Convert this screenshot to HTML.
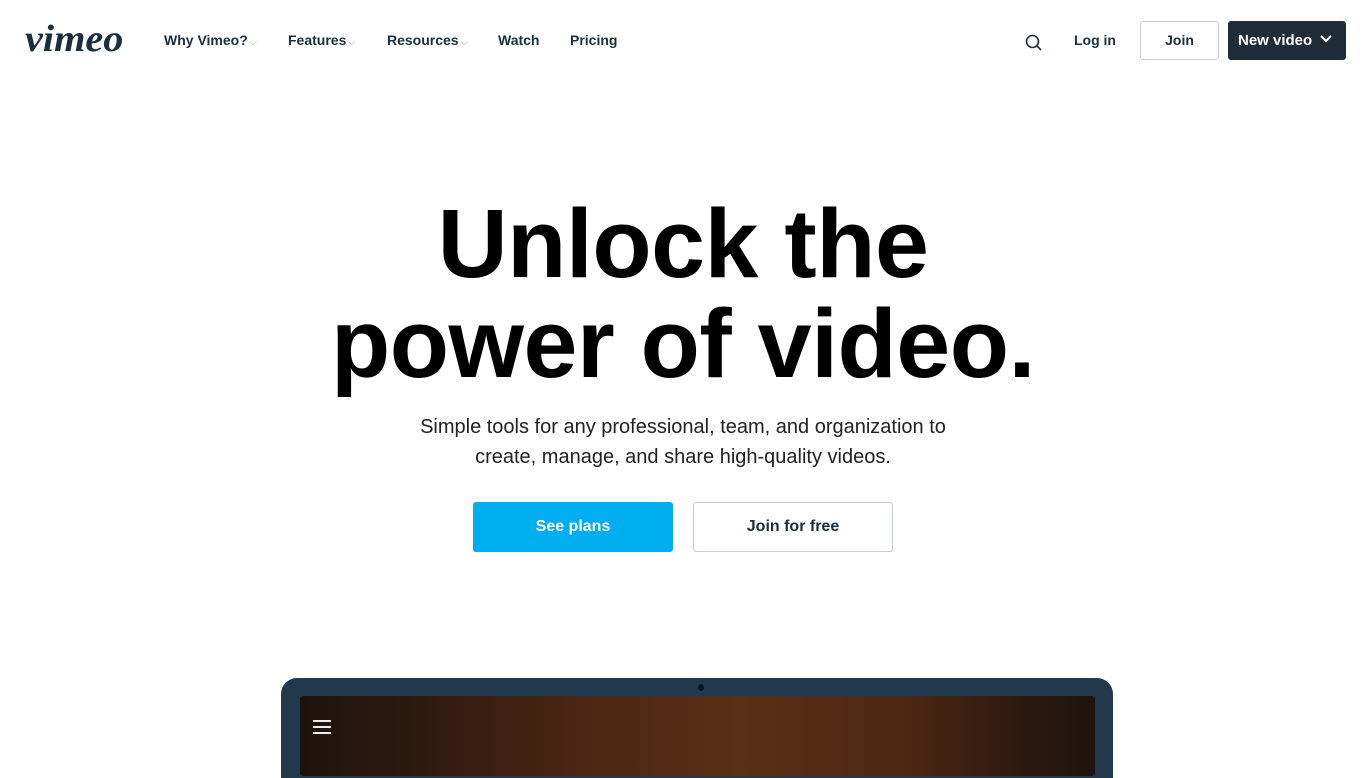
<!DOCTYPE html>
<html><head><meta charset="utf-8"><style>
*{margin:0;padding:0;box-sizing:border-box}
body{width:1366px;height:768px;overflow:hidden;background:#fff;font-family:"Liberation Sans",Arial,sans-serif;color:#1a2e3b;position:relative}
.a{position:absolute}
.nav{font-size:14px;font-weight:bold;top:32px;color:#1a2e3b}
.car{font-size:9px;color:#999;font-weight:normal;margin-left:2px}
h1{position:absolute;left:0;width:1366px;text-align:center;font-size:97px;line-height:100px;font-weight:bold;color:#000;top:194px;letter-spacing:-0.5px}
.sub{left:0;width:1366px;text-align:center;font-size:20px;line-height:30px;color:#222;top:412px}
.btn{top:502px;height:50px;width:200px;border-radius:3px;font-size:16px;font-weight:bold;text-align:center;line-height:48px}
</style></head><body>
<div class="a" style="left:25px;top:19px;font-family:'Liberation Serif',serif;font-style:italic;font-weight:bold;font-size:38px;color:#1a2e3b;letter-spacing:0px;line-height:40px;transform:scaleX(1.06);transform-origin:left">vimeo</div>
<div class="a nav" style="left:164px">Why Vimeo?<span class="car">⌵</span></div>
<div class="a nav" style="left:288px">Features<span class="car">⌵</span></div>
<div class="a nav" style="left:387px">Resources<span class="car">⌵</span></div>
<div class="a nav" style="left:498px">Watch</div>
<div class="a nav" style="left:570px">Pricing</div>
<svg class="a" style="left:1024px;top:33px" width="20" height="20" viewBox="0 0 20 20"><circle cx="8.5" cy="8.5" r="6" fill="none" stroke="#1a2e3b" stroke-width="1.6"/><line x1="13" y1="13" x2="17" y2="17" stroke="#1a2e3b" stroke-width="1.6"/></svg>
<div class="a nav" style="left:1074px">Log in</div>
<div class="a" style="left:1140px;top:21px;width:79px;height:39px;border:1px solid #ccd;border-radius:3px;text-align:center;line-height:37px;font-size:14px;font-weight:bold">Join</div>
<div class="a" style="left:1228px;top:21px;width:118px;height:39px;background:#1f2d38;border-radius:3px;color:#fff;font-size:15px;font-weight:bold;line-height:40px;padding-left:10px">New video <svg width="12" height="8" viewBox="0 0 12 8" style="margin-left:4px;vertical-align:2px"><path d="M1 1l5 5 5-5" fill="none" stroke="#fff" stroke-width="2"/></svg></div>
<h1>Unlock the<br>power of video.</h1>
<div class="a sub">Simple tools for any professional, team, and organization to<br>create, manage, and share high-quality videos.</div>
<div class="a btn" style="left:473px;background:#00adef;color:#fff;line-height:50px">See plans</div>
<div class="a btn" style="left:693px;border:1px solid #c8cdd2;color:#1a2e3b">Join for free</div>
<div class="a" style="left:281px;top:678px;width:832px;height:100px;background:#22394d;border-radius:16px 16px 0 0"></div>
<div class="a" style="left:698px;top:684px;width:6px;height:7px;border-radius:50%;background:#0b1520"></div>
<div class="a" style="left:300px;top:696px;width:795px;height:80px;border-radius:3px;background:linear-gradient(90deg,#1e130d 0%,#2e1a0e 15%,#4a2614 35%,#5a2f17 55%,#4d2814 75%,#2e1a0e 90%,#1e130d 100%)"></div>
<div class="a" style="left:313px;top:720px;width:18px;height:2px;background:#eee;box-shadow:0 6px 0 #eee,0 12px 0 #eee"></div>
</body></html>
